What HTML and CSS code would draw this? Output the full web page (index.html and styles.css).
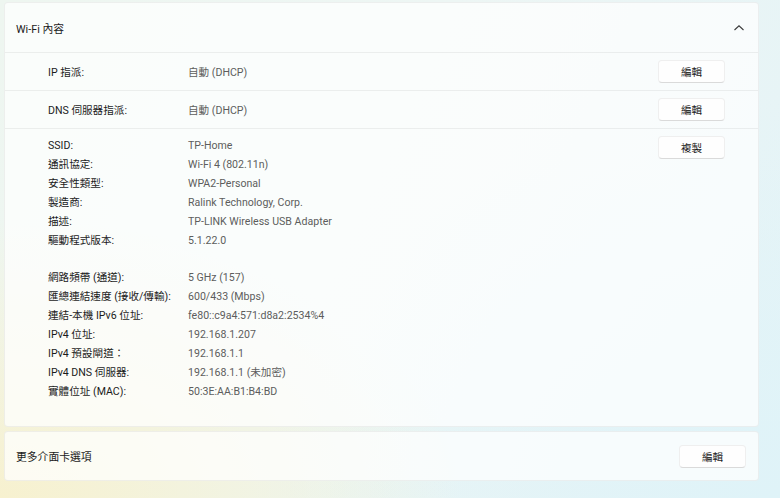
FILE: index.html
```html
<!DOCTYPE html>
<html lang="zh-Hant">
<head>
<meta charset="utf-8">
<title>Wi-Fi 內容</title>
<link rel="stylesheet" href="styles.css">
</head>
<body>
<div class="page">
  <section class="card main">
    <div class="card-header">
      <span class="title">Wi-Fi 內容</span>
      <svg class="chevron" width="12" height="8" viewBox="0 0 12 8"><path d="M1.5 6 L6 1.8 L10.5 6" fill="none" stroke="#3a3a3a" stroke-width="1.1"/></svg>
    </div>
    <div class="row">
      <div class="label">IP 指派:</div>
      <div class="value">自動 (DHCP)</div>
      <button class="btn">編輯</button>
    </div>
    <div class="row">
      <div class="label">DNS 伺服器指派:</div>
      <div class="value">自動 (DHCP)</div>
      <button class="btn">編輯</button>
    </div>
    <div class="details">
      <dl class="props">
        <dt>SSID:</dt><dd>TP-Home</dd>
        <dt>通訊協定:</dt><dd>Wi-Fi 4 (802.11n)</dd>
        <dt>安全性類型:</dt><dd>WPA2-Personal</dd>
        <dt>製造商:</dt><dd>Ralink Technology, Corp.</dd>
        <dt>描述:</dt><dd>TP-LINK Wireless USB Adapter</dd>
        <dt>驅動程式版本:</dt><dd>5.1.22.0</dd>
        <dt class="blank">&nbsp;</dt><dd class="blank">&nbsp;</dd>
        <dt>網路頻帶 (通道):</dt><dd>5 GHz (157)</dd>
        <dt>匯總連結速度 (接收/傳輸):</dt><dd>600/433 (Mbps)</dd>
        <dt>連結-本機 IPv6 位址:</dt><dd>fe80::c9a4:571:d8a2:2534%4</dd>
        <dt>IPv4 位址:</dt><dd>192.168.1.207</dd>
        <dt>IPv4 預設閘道：</dt><dd>192.168.1.1</dd>
        <dt>IPv4 DNS 伺服器:</dt><dd>192.168.1.1 (未加密)</dd>
        <dt>實體位址 (MAC):</dt><dd>50:3E:AA:B1:B4:BD</dd>
      </dl>
      <button class="btn">複製</button>
    </div>
  </section>
  <section class="card more">
    <span class="title">更多介面卡選項</span>
    <button class="btn">編輯</button>
  </section>
</div>
</body>
</html>
```

FILE: styles.css
```css
html, body {
  margin: 0;
  height: 100%;
}
body {
  font-family: "Segoe UI", Roboto, "Noto Sans CJK TC", sans-serif;
  font-size: 10.6px;
  color: #1b1b1b;
  background:
    radial-gradient(ellipse 460px 280px at 0% 100%, #f7f1cf 0%, rgba(247,241,207,0) 100%),
    radial-gradient(ellipse 500px 400px at 100% 100%, #dff3f8 0%, rgba(223,243,248,0) 100%),
    linear-gradient(115deg, #eef6f0 0%, #edf6f4 45%, #e4f3f7 100%);
  overflow: hidden;
}
.page {
  display: flex;
  flex-direction: column;
  gap: 4px;
  padding: 2px 21px 0 4px;
}
.card {
  background: rgba(255,255,255,0.72);
  border: 1px solid rgba(0,0,0,0.055);
  border-radius: 4px;
}
.main {
  height: 423px;
  display: flex;
  flex-direction: column;
}
.card-header {
  height: 49px;
  display: flex;
  align-items: center;
  justify-content: space-between;
  padding: 0 13px 0 11px;
  border-bottom: 1px solid rgba(0,0,0,0.06);
}
.title {
  font-size: 10.8px;
}
.chevron {
  display: block;
}
.row {
  height: 38px;
  display: flex;
  align-items: center;
  padding: 0 33px 0 43px;
  border-bottom: 1px solid rgba(0,0,0,0.06);
  box-sizing: border-box;
}
.row .label { width: 140px; }
.row .value { flex: 1; color: #5d5d5d; }
.btn {
  width: 67px;
  height: 23px;
  box-sizing: border-box;
  font: inherit;
  font-size: 10.6px;
  color: #1b1b1b;
  background: #fefefe;
  border: 1px solid rgba(0,0,0,0.06);
  border-bottom-color: rgba(0,0,0,0.14);
  border-radius: 4px;
  padding: 0;
}
.details {
  display: flex;
  align-items: flex-start;
  padding: 8px 33px 0 43px;
}
.details .btn { margin-top: -1px; }
.props {
  flex: 1;
  margin: 0;
  display: grid;
  grid-template-columns: 140px 1fr;
  line-height: 18.9px;
}
.props dt, .props dd { margin: 0; white-space: nowrap; }
.props dd { color: #5d5d5d; }
.more {
  height: 48px;
  display: flex;
  align-items: center;
  justify-content: space-between;
  padding: 0 12px 0 11px;
}
.more .btn { margin-top: 1px; }
```
